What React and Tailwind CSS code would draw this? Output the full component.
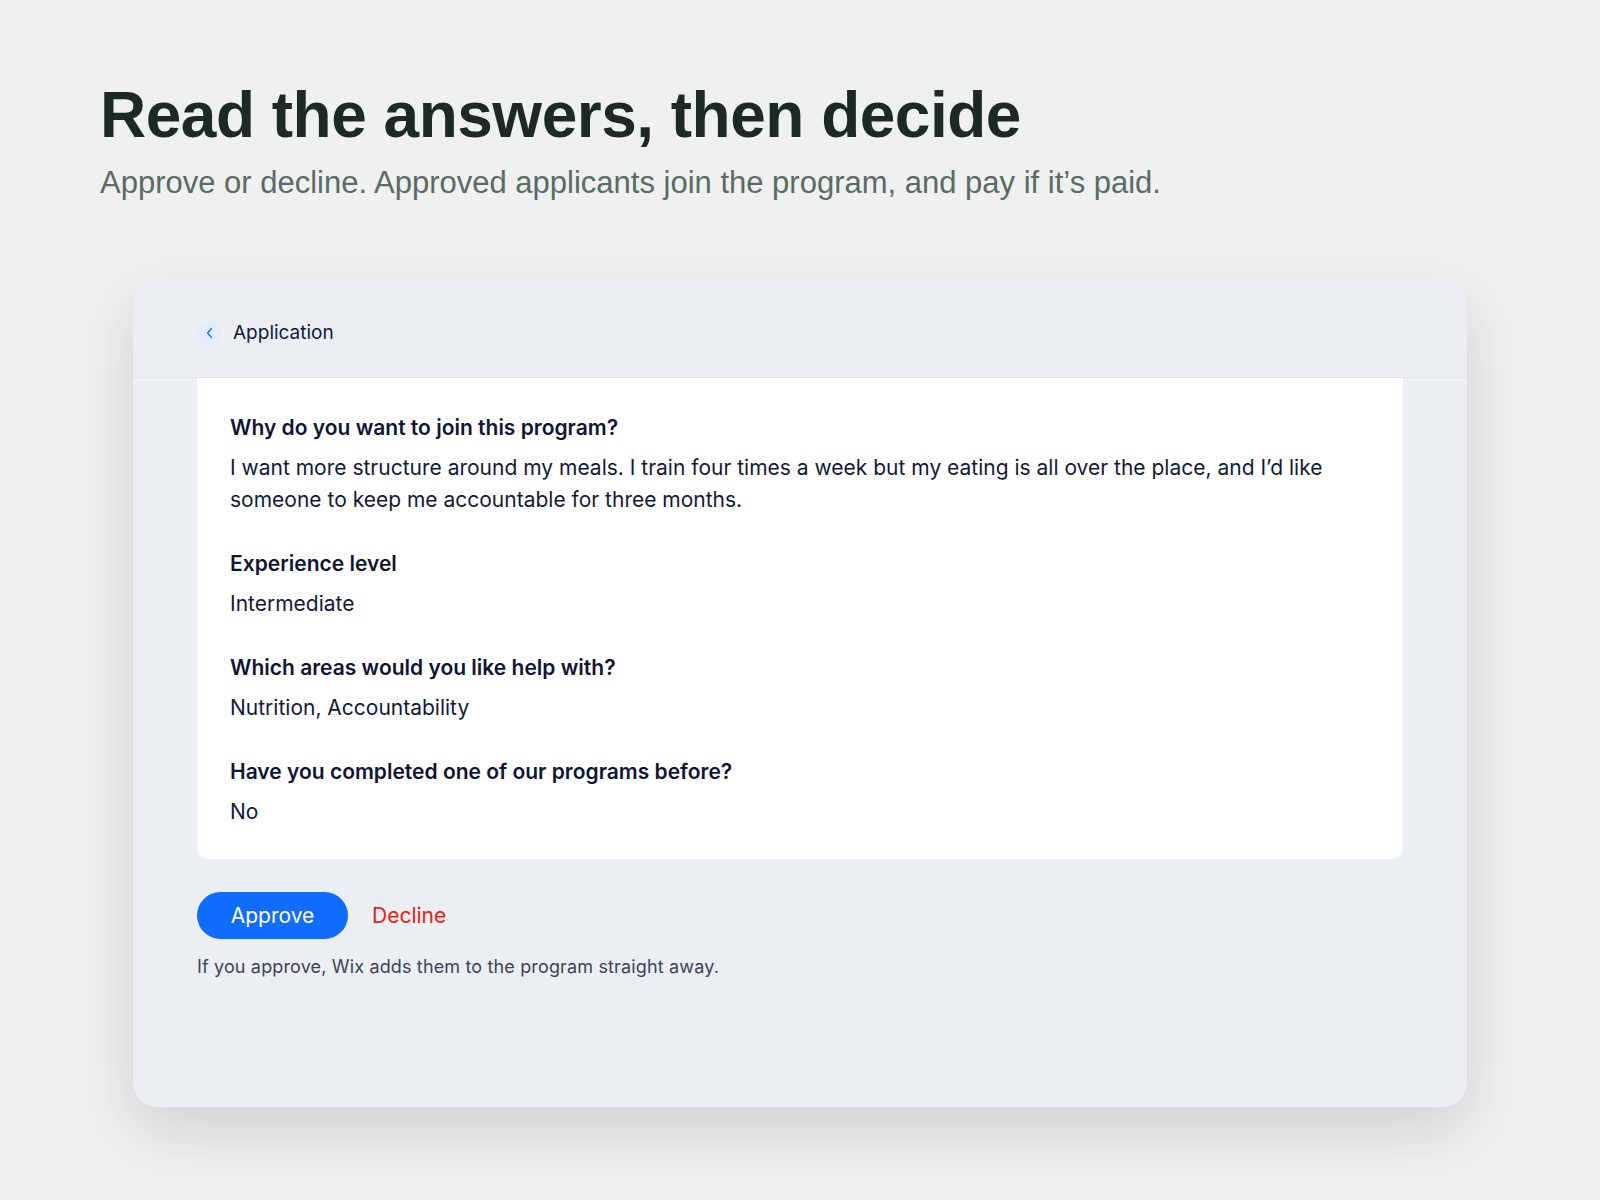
import React from "react";

/* ===========================================================
   APPLICATION REVIEW PAGE
=========================================================== */
export default function App() {
  const answers = [
    {
      q: "Why do you want to join this program?",
      a: "I want more structure around my meals. I train four times a week but my eating is all over the place, and I’d like someone to keep me accountable for three months.",
    },
    { q: "Experience level", a: "Intermediate" },
    { q: "Which areas would you like help with?", a: "Nutrition, Accountability" },
    { q: "Have you completed one of our programs before?", a: "No" },
  ];

  return (
    <div className="min-h-[1200px] w-[1600px] bg-[#eff1f0] pt-[83px] font-['Inter',sans-serif]">
      {/* ---------------------- TITLE ---------------------- */}
      <div className="pl-[100px]">
        <h1 className="font-['Liberation_Sans',Arial,sans-serif] text-[64px] font-bold leading-none tracking-[-0.5px] text-[#1d2925]">
          Read the answers, then decide
        </h1>
        <p className="mt-[18px] font-['Liberation_Sans',Arial,sans-serif] text-[31px] leading-9 text-[#5b6a65]">
          Approve or decline. Approved applicants join the program, and pay if it’s paid.
        </p>
      </div>

      {/* ---------------------- CARD ---------------------- */}
      <div className="mx-auto mt-[78px] h-[828px] w-[1334px] rounded-3xl bg-[#ebeef3] shadow-[0_24px_60px_rgba(40,50,45,0.16)]">
        {/* Header */}
        <div className="flex h-[99px] items-center gap-[11px] border-b border-[#dde1e7] pt-[10px] pl-[64px]">
          <button className="flex h-[25px] w-[25px] items-center justify-center rounded-full bg-[#e3ecfc]">
            <svg width="12" height="12" viewBox="0 0 12 12" fill="none">
              <path d="M7.5 1.5 3.5 6l4 4.5" stroke="#116dff" strokeWidth="1.3" strokeLinecap="round" strokeLinejoin="round" />
            </svg>
          </button>
          <span className="text-[19px] text-[#131a36]">Application</span>
        </div>

        {/* Answers */}
        <div className="px-[64px]">
          <div className="flex flex-col gap-[32px] rounded-b-xl bg-white px-[33px] pt-[34px] pb-[31px]">
            {answers.map((item) => (
              <AnswerBlock key={item.q} question={item.q} answer={item.a} />
            ))}
          </div>

          {/* Actions */}
          <div className="mt-[33px] flex items-center gap-[24px]">
            <button className="h-[47px] w-[151px] rounded-full bg-[#116dff] text-[21px] text-white">
              Approve
            </button>
            <button className="text-[21px] text-[#e62214]">Decline</button>
          </div>
          <p className="mt-[14px] text-[18px] tracking-[0.15px] text-[#3d4257]">
            If you approve, Wix adds them to the program straight away.
          </p>
        </div>
      </div>
    </div>
  );
}

/* ===========================================================
   REUSABLE COMPONENTS
=========================================================== */

function AnswerBlock({ question, answer }) {
  return (
    <div className="flex flex-col gap-[8px]">
      <p className="text-[21px] font-semibold leading-[32px] text-[#0f1533]">{question}</p>
      <p className="text-[21px] leading-[32px] text-[#131a36]">{answer}</p>
    </div>
  );
}
